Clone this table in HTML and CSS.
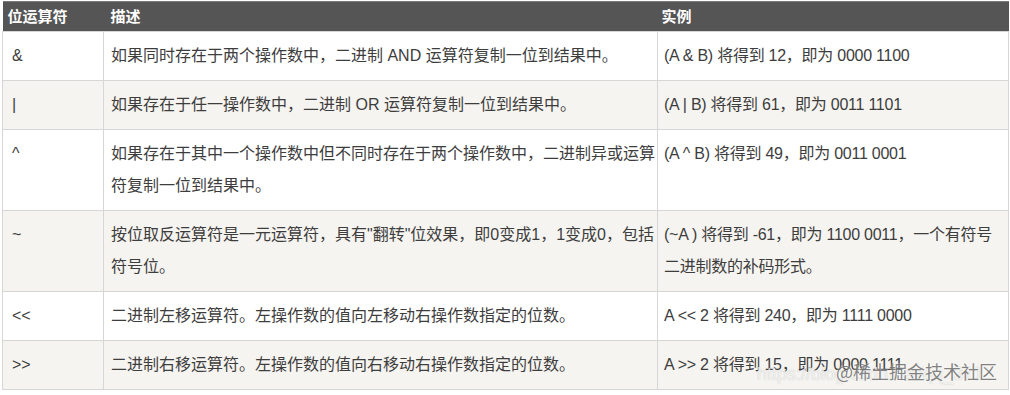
FILE: index.html
```html
<!DOCTYPE html>
<html lang="zh">
<head>
<meta charset="utf-8">
<link rel="stylesheet" href="styles.css">
</head>
<body>
<div class="wrap">
<table class="ops">
<colgroup><col class="c1"><col class="c2"><col class="c3"></colgroup>
<thead>
<tr><th>位运算符</th><th>描述</th><th>实例</th></tr>
</thead>
<tbody>
<tr><td>&amp;</td><td>如果同时存在于两个操作数中，二进制 AND 运算符复制一位到结果中。</td><td>(A &amp; B) 将得到 12，即为 0000 1100</td></tr>
<tr class="alt"><td>|</td><td>如果存在于任一操作数中，二进制 OR 运算符复制一位到结果中。</td><td>(A | B) 将得到 61，即为 0011 1101</td></tr>
<tr><td>^</td><td>如果存在于其中一个操作数中但不同时存在于两个操作数中，二进制异或运算符复制一位到结果中。</td><td>(A ^ B) 将得到 49，即为 0011 0001</td></tr>
<tr class="alt"><td>~</td><td>按位取反运算符是一元运算符，具有"翻转"位效果，即0变成1，1变成0，包括符号位。</td><td>(~A ) 将得到 -61，即为 1100 0011，一个有符号二进制数的补码形式。</td></tr>
<tr><td>&lt;&lt;</td><td>二进制左移运算符。左操作数的值向左移动右操作数指定的位数。</td><td>A &lt;&lt; 2 将得到 240，即为 1111 0000</td></tr>
<tr class="alt"><td>&gt;&gt;</td><td>二进制右移运算符。左操作数的值向右移动右操作数指定的位数。</td><td>A &gt;&gt; 2 将得到 15，即为 0000 1111</td></tr>
</tbody>
</table>
<div class="wm-url">https://blog.csdn.net/qq_371</div>
<div class="wm-brand">@稀土掘金技术社区</div>
</div>
</body>
</html>
```
FILE: styles.css
```css
html, body {
  margin: 0;
  padding: 0;
  background: #ffffff;
}
body {
  font-family: "Liberation Sans", "Noto Sans CJK SC", sans-serif;
  color: #333333;
}
.wrap {
  position: relative;
  width: 1010px;
  height: 395px;
  padding: 1px 0 0 2px;
  box-sizing: border-box;
  overflow: hidden;
}
.ops {
  width: 1007px;
  border-collapse: collapse;
  table-layout: fixed;
  font-size: 16px;
}
.c1 { width: 101px; }
.c2 { width: 554px; }
.ops th {
  background: #555555;
  color: #ffffff;
  font-weight: bold;
  font-size: 15px;
  line-height: 21px;
  padding: 4px 6px 4px 5px;
  text-align: left;
  border-top: 1px solid #7a7a7a;
}
.ops th + th { padding-left: 7px; }
.ops th:last-child { padding-left: 4px; }
.ops td {
  border: 1px solid #d6d6d6;
  padding: 8px 0 8px 7px;
  line-height: 32px;
  vertical-align: top;
  background: #ffffff;
  color: #3d3d3d;
}
.ops td:first-child { padding-left: 9px; }
.ops td:last-child {
  padding-left: 6px;
  padding-right: 9px;
  letter-spacing: -0.25px;
}
.ops tr.alt td { background: #f6f4f0; }
.wm-url {
  position: absolute;
  left: 757px;
  top: 364px;
  font-size: 18px;
  color: rgba(255, 255, 255, 0.75);
  text-shadow: 0 0 1px rgba(140, 140, 140, 0.55);
  white-space: nowrap;
}
.wm-brand {
  position: absolute;
  left: 836px;
  top: 358px;
  font-size: 18px;
  line-height: 26px;
  font-family: "Noto Sans CJK SC", sans-serif;
  color: rgba(90, 90, 90, 0.75);
  text-shadow: 0 0 2px rgba(255, 255, 255, 0.9);
  white-space: nowrap;
}
```
